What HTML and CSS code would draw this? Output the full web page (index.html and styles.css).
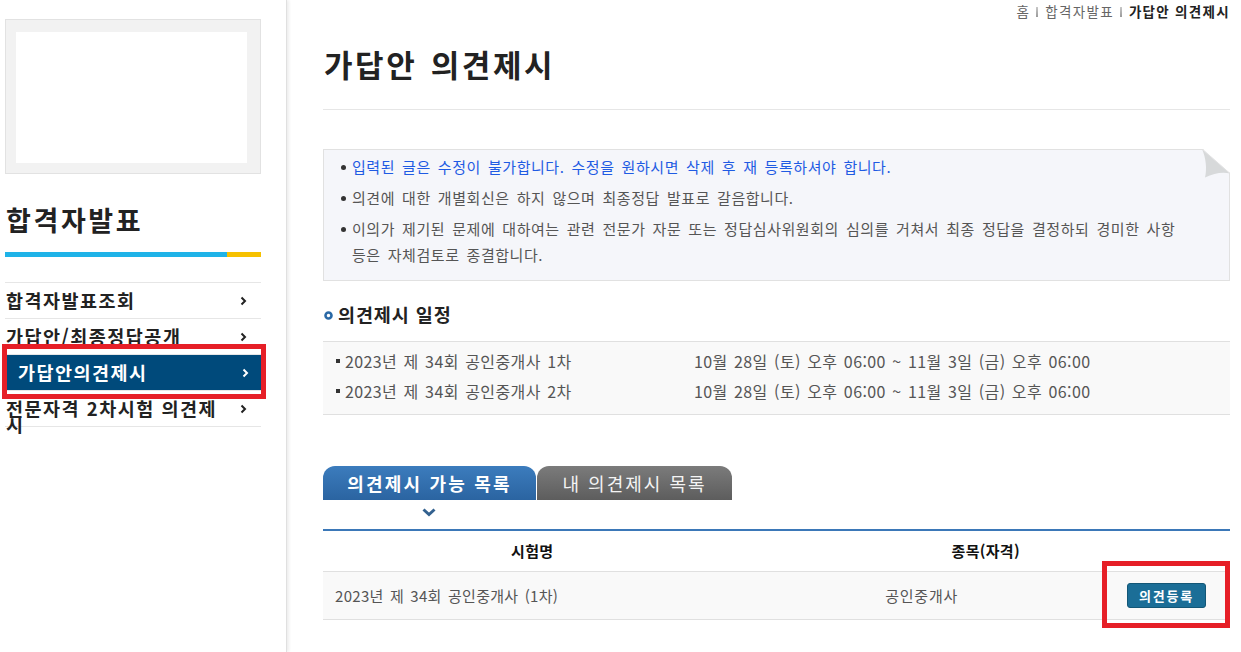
FILE: index.html
```html
<!DOCTYPE html>
<html lang="ko">
<head>
<meta charset="utf-8">
<title>가답안 의견제시</title>
<link rel="stylesheet" href="styles.css">
</head>
<body>
<div class="page">
  <aside class="sidebar">
    <div class="side-inner">
      <div class="logo-box"><div class="logo-inner"></div></div>
      <h2 class="side-title">합격자발표</h2>
      <div class="side-bar"><span class="bar-blue"></span><span class="bar-yellow"></span></div>
      <ul class="menu">
        <li class="menu-item"><a class="menu-link"><span class="menu-text">합격자발표조회</span><svg class="chev" width="7" height="10" viewBox="0 0 7 10"><polyline points="1.5,1.5 5,5 1.5,8.5" fill="none" stroke="currentColor" stroke-width="2"/></svg></a></li>
        <li class="menu-item"><a class="menu-link"><span class="menu-text">가답안/최종정답공개</span><svg class="chev" width="7" height="10" viewBox="0 0 7 10"><polyline points="1.5,1.5 5,5 1.5,8.5" fill="none" stroke="currentColor" stroke-width="2"/></svg></a></li>
        <li class="menu-item is-active"><a class="menu-link"><span class="menu-text">가답안의견제시</span><svg class="chev" width="7" height="10" viewBox="0 0 7 10"><polyline points="1.5,1.5 5,5 1.5,8.5" fill="none" stroke="currentColor" stroke-width="2"/></svg></a><span class="mark mark-menu"></span></li>
        <li class="menu-item"><a class="menu-link"><span class="menu-text">전문자격 2차시험 의견제시</span><svg class="chev" width="7" height="10" viewBox="0 0 7 10"><polyline points="1.5,1.5 5,5 1.5,8.5" fill="none" stroke="currentColor" stroke-width="2"/></svg></a></li>
      </ul>
    </div>
  </aside>

  <main class="main">
    <nav class="crumbs">
      <span class="crumb">홈</span><span class="crumb-sep"></span><span class="crumb">합격자발표</span><span class="crumb-sep"></span><span class="crumb crumb-current">가답안 의견제시</span>
    </nav>
    <h1 class="page-title">가답안 의견제시</h1>

    <div class="notice">
      <ul class="notice-list">
        <li class="notice-item notice-blue">입력된 글은 수정이 불가합니다. 수정을 원하시면 삭제 후 재 등록하셔야 합니다.</li>
        <li class="notice-item">의견에 대한 개별회신은 하지 않으며 최종정답 발표로 갈음합니다.</li>
        <li class="notice-item">이의가 제기된 문제에 대하여는 관련 전문가 자문 또는 정답심사위원회의 심의를 거쳐서 최종 정답을 결정하되 경미한 사항<br>등은 자체검토로 종결합니다.</li>
      </ul>
      <svg class="fold" width="28" height="29" viewBox="0 0 28 29">
        <polygon points="0,-1 29,-1 29,25" fill="#ffffff"/>
        <path d="M0,0 L28,24.5 C21,22.5 12,24 3,28.5 C5,20 4,9 0,0 Z" fill="#d7d9da"/>
        <line x1="0" y1="0" x2="28" y2="24.5" stroke="#e2e2e2" stroke-width="1"/>
      </svg>
    </div>

    <h3 class="sec-title"><svg class="ring" width="9" height="9" viewBox="0 0 9 9"><circle cx="4.5" cy="4.5" r="3" fill="#fff" stroke="#2a69a6" stroke-width="2.6"/></svg>의견제시 일정</h3>
    <div class="schedule">
      <div class="sched-row"><span class="sched-name">2023년 제 34회 공인중개사 1차</span><span class="sched-date">10월 28일 (토) 오후 06:00 ~ 11월 3일 (금) 오후 06:00</span></div>
      <div class="sched-row"><span class="sched-name">2023년 제 34회 공인중개사 2차</span><span class="sched-date">10월 28일 (토) 오후 06:00 ~ 11월 3일 (금) 오후 06:00</span></div>
    </div>

    <div class="tabs">
      <div class="tab tab-on">의견제시 가능 목록</div>
      <div class="tab tab-off">내 의견제시 목록</div>
    </div>
    <div class="tab-pointer"><svg width="14" height="9" viewBox="0 0 14 9"><polyline points="1.5,1.5 7,6.5 12.5,1.5" fill="none" stroke="#33618f" stroke-width="3"/></svg></div>

    <table class="list">
      <colgroup><col class="c1"><col class="c2"><col class="c3"></colgroup>
      <thead>
        <tr><th>시험명</th><th colspan="2">종목(자격)</th></tr>
      </thead>
      <tbody>
        <tr>
          <td class="td-name">2023년 제 34회 공인중개사 (1차)</td>
          <td class="td-center">공인중개사</td>
          <td class="td-btn"><button class="btn-reg">의견등록</button><span class="mark mark-btn"></span></td>
        </tr>
      </tbody>
    </table>
  </main>
</div>
</body>
</html>
```

FILE: styles.css
```css
* { box-sizing: border-box; }
html, body { margin: 0; padding: 0; background: #fff; }
body {
  font-family: "Noto Sans CJK KR", "Noto Sans", sans-serif;
  color: #333;
  width: 1241px;
  height: 652px;
  overflow: hidden;
}
.page { display: flex; min-height: 652px; }

/* sidebar */
.sidebar {
  width: 287px;
  flex-shrink: 0;
  min-height: 652px;
  border-right: 1px solid #e0e0e0;
  box-shadow: 2px 0 3px rgba(0,0,0,0.07);
  padding: 19px 0 0 5px;
}
.side-inner { width: 256px; }
.logo-box {
  height: 155px;
  width: 256px;
  border: 1px solid #e2e2e2;
  background: #f2f2f2;
  padding: 12px 13px 10px 10px;
}
.logo-inner { background: #fff; height: 100%; }
.side-title {
  margin: 0;
  padding: 28px 0 0 1px;
  font-size: 27px;
  line-height: 36px;
  font-weight: 700;
  color: #222;
  letter-spacing: 2.6px;
}
.side-bar { display: flex; height: 5px; margin-top: 14px; }
.bar-blue { width: 222px; background: #1fb3e8; }
.bar-yellow { flex: 1; background: #f6c100; }
.menu { list-style: none; margin: 25px 0 0; padding: 0; border-top: 1px solid #e6e6e6; }
.menu-item { position: relative; height: 36px; border-bottom: 1px solid #e6e6e6; }
.menu-link {
  display: flex;
  align-items: flex-start;
  justify-content: space-between;
  height: 35px;
  padding: 9px 14px 0 1px;
  color: #222;
  font-size: 18.5px;
  font-weight: 700;
  line-height: 16px;
  letter-spacing: 1.5px;
}
.menu-text { width: 216px; }
.chev { margin-top: 4px; color: #222; }
.is-active .menu-link {
  background: #004a7b;
  color: #fff;
  margin-left: 2px;
  padding-left: 11px;
  padding-right: 12px;
}
.is-active .chev { color: #fff; }

/* annotation marks */
.mark { position: absolute; border: 5px solid #e61f27; pointer-events: none; }
.mark-menu { left: -3px; top: -11px; right: -5px; bottom: -9px; }
.mark-btn { left: 0; top: -11px; right: 0; bottom: -9px; }

/* main */
.main { flex: 1; padding: 0 11px 0 36px; }
.crumbs {
  display: flex;
  justify-content: flex-end;
  align-items: center;
  height: 22px;
  font-size: 13.5px;
  color: #666;
  padding-right: 0;
  letter-spacing: 1.3px;
}
.crumb-sep {
  display: inline-block;
  width: 2px;
  height: 10px;
  background: linear-gradient(#c8c8c8, #9a9a9a);
  margin: 2px 7px 0 6px;
}
.crumb-current { color: #222; font-weight: 700; }
.page-title {
  margin: 0;
  padding: 20px 0 23px 1px;
  font-size: 31px;
  line-height: 44px;
  font-weight: 700;
  color: #222;
  letter-spacing: 2.6px;
  word-spacing: 2px;
  border-bottom: 1px solid #e6e6e6;
}

.notice {
  position: relative;
  margin-top: 39px;
  background: #f5f6fa;
  border: 1px solid #e1e1e1;
  padding: 4px 30px 12px 28px;
}
.notice-list { margin: 0; padding: 0; list-style: none; }
.notice-item {
  position: relative;
  font-size: 15px;
  line-height: 26px;
  color: #555;
  letter-spacing: 0.55px;
  word-spacing: 2.3px;
}
.notice-item + .notice-item { margin-top: 5px; }
.notice-item::before {
  content: "";
  position: absolute;
  left: -11px;
  top: 11px;
  width: 5px;
  height: 5px;
  border-radius: 50%;
  background: #333;
}
.notice-blue { color: #1f5be3; }
.fold { position: absolute; top: -1px; right: -1px; }

.sec-title {
  display: flex;
  align-items: center;
  margin: 20px 0 0;
  font-size: 18.5px;
  line-height: 26px;
  font-weight: 700;
  color: #222;
  letter-spacing: 0.9px;
}
.ring { margin: 3px 5px 0 1px; }

.schedule {
  margin-top: 14px;
  background: #f9f9f9;
  border-top: 1px solid #e0e0e0;
  border-bottom: 1px solid #e0e0e0;
  padding: 4px 0 8px;
}
.sched-row {
  display: flex;
  height: 30px;
  align-items: center;
  font-size: 16px;
  color: #555;
  letter-spacing: 0.4px;
  word-spacing: 1.5px;
}
.sched-name { position: relative; width: 371px; padding-left: 22px; }
.sched-name::before {
  content: "";
  position: absolute;
  left: 13px;
  top: 50%;
  margin-top: -2px;
  width: 4px;
  height: 4px;
  background: #333;
}

.tabs { display: flex; gap: 1px; margin-top: 51px; height: 34px; }
.tab {
  height: 34px;
  border-radius: 12px 12px 0 0;
  color: #fff;
  font-size: 18px;
  line-height: 34px;
  text-align: center;
  letter-spacing: 2.2px;
}
.tab-on {
  width: 213px;
  background: linear-gradient(#3c7cbd, #2b64a1);
  font-weight: 700;
}
.tab-off {
  width: 195px;
  background: linear-gradient(#7b7b7b, #5d5d5d);
  color: #f4f4f4;
  letter-spacing: 2px;
}
.tab-pointer { height: 29px; padding: 8px 0 0 99px; line-height: 0; }

.list { width: 100%; border-collapse: collapse; table-layout: fixed; border-top: 2px solid #3b78b8; }
.c1 { width: 418px; }
.c2 { width: 360px; }
.c3 { width: 128px; }
.list th {
  height: 41px;
  font-size: 15px;
  font-weight: 700;
  color: #111;
  text-align: center;
  border-bottom: 1px solid #e0e0e0;
  padding: 0;
  letter-spacing: 0.3px;
}
.list td {
  height: 48px;
  background: #f9f9f9;
  border-bottom: 1px solid #e0e0e0;
  font-size: 15px;
  color: #555;
  padding: 0;
  letter-spacing: 0.3px;
}
.td-name { padding-left: 12px !important; word-spacing: 1.8px; }
.td-center { text-align: center; letter-spacing: 0.8px !important; }
.td-btn { position: relative; text-align: center; padding-left: 1px !important; }
.btn-reg {
  font-family: inherit;
  width: 79px;
  height: 25px;
  border: 1px solid #135777;
  border-radius: 3px;
  background: #1b6e97;
  color: #fff;
  font-size: 13px;
  font-weight: 700;
  padding: 0;
  line-height: 23px;
  letter-spacing: 1.8px;
}
```
